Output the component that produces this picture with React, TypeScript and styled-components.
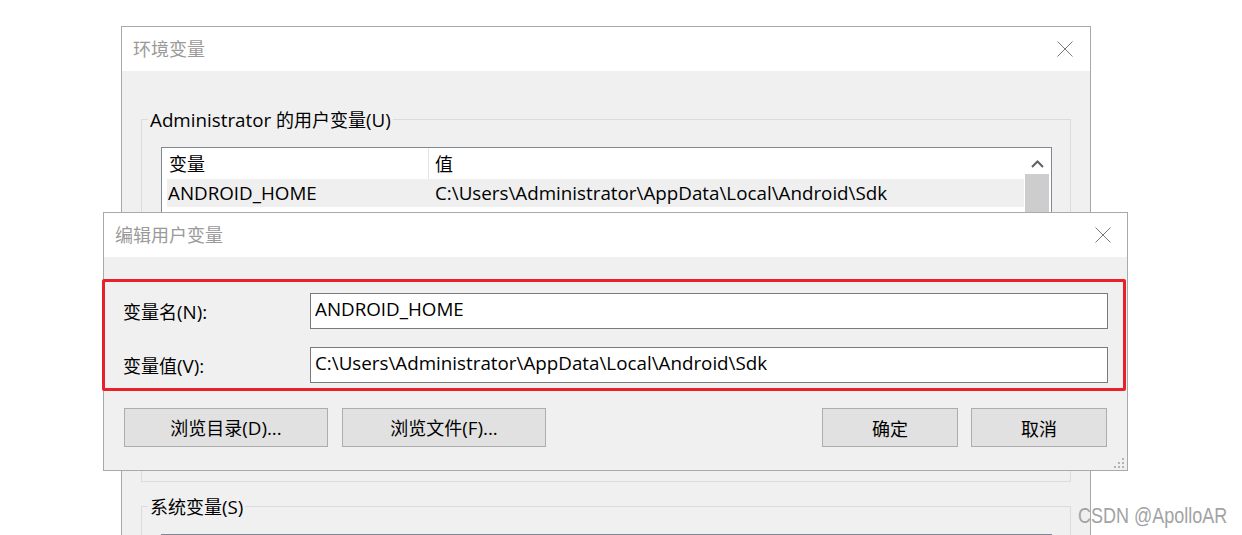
import React from "react";
import styled, { createGlobalStyle } from "styled-components";

const GlobalStyle = createGlobalStyle`
  html, body { margin: 0; padding: 0; background: #ffffff; }
  body {
    font-family: "Noto Sans CJK SC", "Noto Sans", sans-serif;
    font-size: 18px;
    color: #000;
  }
  * { box-sizing: border-box; }
`;

const LATIN_FONT = `"Open Sans", "Noto Sans", sans-serif`;
const LATIN_SIZE = 18.8;

const Desktop = styled.div`
  position: relative;
  width: 1242px;
  height: 535px;
  overflow: hidden;
  background: #fff;
`;

const Win = styled.div<{ $x: number; $y: number; $w: number; $h: number }>`
  position: absolute;
  left: ${(p) => p.$x}px;
  top: ${(p) => p.$y}px;
  width: ${(p) => p.$w}px;
  height: ${(p) => p.$h}px;
  border: 1px solid #a9a9a9;
  background: #f0f0f0;
  display: flex;
  flex-direction: column;
`;

const TitleBar = styled.div<{ $padRight: number }>`
  flex: 0 0 44px;
  height: 44px;
  background: #fff;
  display: flex;
  align-items: center;
  justify-content: space-between;
  padding: 0 ${(p) => p.$padRight}px 0 11px;
`;

const TitleText = styled.span`
  color: #9a9a9a;
  font-size: 18px;
  line-height: 24px;
  margin-top: -2px;
`;

const Latin = styled.span`
  font-family: ${LATIN_FONT};
  font-size: ${LATIN_SIZE}px;
`;

const CJK_RE = /([\u2E80-\u9FFF\u3000-\u303F\uFF00-\uFFEF]+)/;

function Txt({ children }: { children: string }) {
  const parts = children.split(CJK_RE).filter((s) => s !== "");
  return (
    <>
      {parts.map((p, i) =>
        CJK_RE.test(p) ? (
          <React.Fragment key={i}>{p}</React.Fragment>
        ) : (
          <Latin key={i}>{p}</Latin>
        )
      )}
    </>
  );
}

function CloseIcon() {
  return (
    <svg width="16" height="16" viewBox="0 0 16 16">
      <path d="M0.5 0.5 L15.5 15.5 M15.5 0.5 L0.5 15.5" stroke="#7a7a7a" strokeWidth="1" fill="none" />
    </svg>
  );
}

/* ---------- back window ---------- */

const BackBody = styled.div`
  flex: 1;
  padding: 0 19px;
  display: flex;
  flex-direction: column;
`;

const Group = styled.fieldset<{ $mt: number }>`
  flex-shrink: 0;
  margin: ${(p) => p.$mt}px 0 0;
  padding: 0;
  border: 1px solid #dcdcdc;
  min-width: 0;
`;

const Legend = styled.legend`
  margin-left: 6px;
  padding: 0 2px;
  font-size: 18px;
  line-height: 26px;
  color: #000;
`;

const GroupContent = styled.div<{ $pt: number; $pb: number }>`
  padding: ${(p) => p.$pt}px 18px ${(p) => p.$pb}px 19px;
  display: flex;
  flex-direction: column;
`;

const ListBox = styled.div<{ $h: number }>`
  height: ${(p) => p.$h}px;
  border: 1px solid #828790;
  background: #fff;
  display: flex;
`;

const ListMain = styled.div`
  flex: 1;
  min-width: 0;
  display: flex;
  flex-direction: column;
`;

const HeaderRow = styled.div`
  height: 31px;
  display: grid;
  grid-template-columns: 267px 1fr;
`;

const HeaderCell = styled.div<{ $pl: number; $divider?: boolean }>`
  padding-left: ${(p) => p.$pl}px;
  line-height: 31px;
  white-space: nowrap;
  border-right: ${(p) => (p.$divider ? "1px solid #e5e5e5" : "none")};
`;

const DataRow = styled.div<{ $selected?: boolean }>`
  height: 28px;
  margin-left: 5px;
  display: grid;
  grid-template-columns: 262px 1fr;
  background: ${(p) => (p.$selected ? "#efefef" : "transparent")};
`;

const DataCell = styled.div<{ $pl: number }>`
  padding-left: ${(p) => p.$pl}px;
  line-height: 26px;
  white-space: nowrap;
  overflow: hidden;
`;

const ScrollBar = styled.div`
  width: 24px;
  margin: 0 2px 0 1px;
  display: flex;
  flex-direction: column;
  background: #f0f0f0;
`;

const ScrollArrow = styled.div`
  height: 26px;
  display: flex;
  justify-content: center;
  padding-top: 12px;
  background: #fff;
`;

const ScrollThumb = styled.div`
  flex: 0 0 160px;
  background: #cdcdcd;
`;

const GroupButtons = styled.div`
  margin-top: 14px;
  display: flex;
  justify-content: flex-end;
  gap: 13px;
`;

function ChevronUp() {
  return (
    <svg width="13" height="8" viewBox="0 0 13 8">
      <path d="M1 7 L6.5 1.5 L12 7" stroke="#606060" strokeWidth="2" fill="none" />
    </svg>
  );
}

/* ---------- front dialog ---------- */

const DialogBody = styled.div`
  flex: 1;
  display: flex;
  flex-direction: column;
`;

const Highlight = styled.div`
  margin: 22px 1px 0 -2px;
  border: 3px solid #e8202a;
  border-radius: 2px;
  padding: 11px 15px 5px 18px;
  display: flex;
  flex-direction: column;
  gap: 18px;
`;

const FieldRow = styled.div`
  height: 36px;
  display: grid;
  grid-template-columns: 187px 1fr;
  align-items: center;
`;

const FieldLabel = styled.label`
  font-size: 18px;
  line-height: 26px;
  white-space: nowrap;
`;

const TextBox = styled.input`
  height: 36px;
  width: 100%;
  border: 1px solid #7a7a7a;
  background: #fff;
  padding: 0 4px 5px 4px;
  margin: 0;
  font-family: ${LATIN_FONT};
  font-size: ${LATIN_SIZE}px;
  color: #000;
  outline: none;
`;

const ButtonBar = styled.div`
  margin-top: 17px;
  padding: 0 20px;
  display: flex;
  justify-content: space-between;
`;

const ButtonGroup = styled.div<{ $gap: number }>`
  display: flex;
  gap: ${(p) => p.$gap}px;
`;

const Button = styled.button<{ $w: number }>`
  width: ${(p) => p.$w}px;
  height: 39px;
  border: 1px solid #adadad;
  background: #e1e1e1;
  font-family: inherit;
  font-size: 18px;
  line-height: 26px;
  color: #000;
  padding: 0;
  white-space: nowrap;
`;

const Grip = styled.svg`
  position: absolute;
  right: 3px;
  bottom: 2px;
`;

const Watermark = styled.div`
  position: absolute;
  left: 1078px;
  top: 507px;
  font-family: "Liberation Sans", Arial, sans-serif;
  font-size: 18px;
  line-height: 20px;
  color: #a3a3a3;
  white-space: nowrap;
  transform: scaleY(1.2);
  transform-origin: 0 16px;
`;

const PATH = "C:\\Users\\Administrator\\AppData\\Local\\Android\\Sdk";

export default function App() {
  return (
    <>
      <GlobalStyle />
      <Desktop>
        <Win $x={121} $y={26} $w={970} $h={620}>
          <TitleBar $padRight={17}>
            <TitleText>环境变量</TitleText>
            <CloseIcon />
          </TitleBar>
          <BackBody>
            <Group $mt={35}>
              <Legend>
                <Txt>Administrator 的用户变量(U)</Txt>
              </Legend>
              <GroupContent $pt={14} $pb={51}>
                <ListBox $h={230}>
                  <ListMain>
                    <HeaderRow>
                      <HeaderCell $pl={7} $divider>
                        变量
                      </HeaderCell>
                      <HeaderCell $pl={6}>值</HeaderCell>
                    </HeaderRow>
                    <DataRow $selected>
                      <DataCell $pl={1}>
                        <Txt>ANDROID_HOME</Txt>
                      </DataCell>
                      <DataCell $pl={6}>
                        <Txt>{PATH}</Txt>
                      </DataCell>
                    </DataRow>
                  </ListMain>
                  <ScrollBar>
                    <ScrollArrow>
                      <ChevronUp />
                    </ScrollArrow>
                    <ScrollThumb />
                  </ScrollBar>
                </ListBox>
                <GroupButtons>
                  <Button $w={136}>
                    <Txt>新建(N)...</Txt>
                  </Button>
                  <Button $w={136}>
                    <Txt>编辑(E)...</Txt>
                  </Button>
                  <Button $w={136}>
                    <Txt>删除(D)</Txt>
                  </Button>
                </GroupButtons>
              </GroupContent>
            </Group>
            <Group $mt={11}>
              <Legend>
                <Txt>系统变量(S)</Txt>
              </Legend>
              <GroupContent $pt={14} $pb={20}>
                <ListBox $h={200}>
                  <ListMain />
                </ListBox>
              </GroupContent>
            </Group>
          </BackBody>
        </Win>

        <Win $x={103} $y={212} $w={1025} $h={259}>
          <TitleBar $padRight={16}>
            <TitleText>编辑用户变量</TitleText>
            <CloseIcon />
          </TitleBar>
          <DialogBody>
            <Highlight>
              <FieldRow>
                <FieldLabel>
                  <Txt>变量名(N):</Txt>
                </FieldLabel>
                <TextBox readOnly value="ANDROID_HOME" />
              </FieldRow>
              <FieldRow>
                <FieldLabel>
                  <Txt>变量值(V):</Txt>
                </FieldLabel>
                <TextBox readOnly value={PATH} />
              </FieldRow>
            </Highlight>
            <ButtonBar>
              <ButtonGroup $gap={14}>
                <Button $w={204}>
                  <Txt>浏览目录(D)...</Txt>
                </Button>
                <Button $w={204}>
                  <Txt>浏览文件(F)...</Txt>
                </Button>
              </ButtonGroup>
              <ButtonGroup $gap={13}>
                <Button $w={136}>确定</Button>
                <Button $w={136}>取消</Button>
              </ButtonGroup>
            </ButtonBar>
          </DialogBody>
          <Grip width="10" height="10" viewBox="0 0 10 10">
            <rect x="8" y="0" width="2" height="2" fill="#b4b4b4" />
            <rect x="4" y="4" width="2" height="2" fill="#b4b4b4" />
            <rect x="8" y="4" width="2" height="2" fill="#b4b4b4" />
            <rect x="0" y="8" width="2" height="2" fill="#b4b4b4" />
            <rect x="4" y="8" width="2" height="2" fill="#b4b4b4" />
            <rect x="8" y="8" width="2" height="2" fill="#b4b4b4" />
          </Grip>
        </Win>

        <Watermark>CSDN @ApolloAR</Watermark>
      </Desktop>
    </>
  );
}
